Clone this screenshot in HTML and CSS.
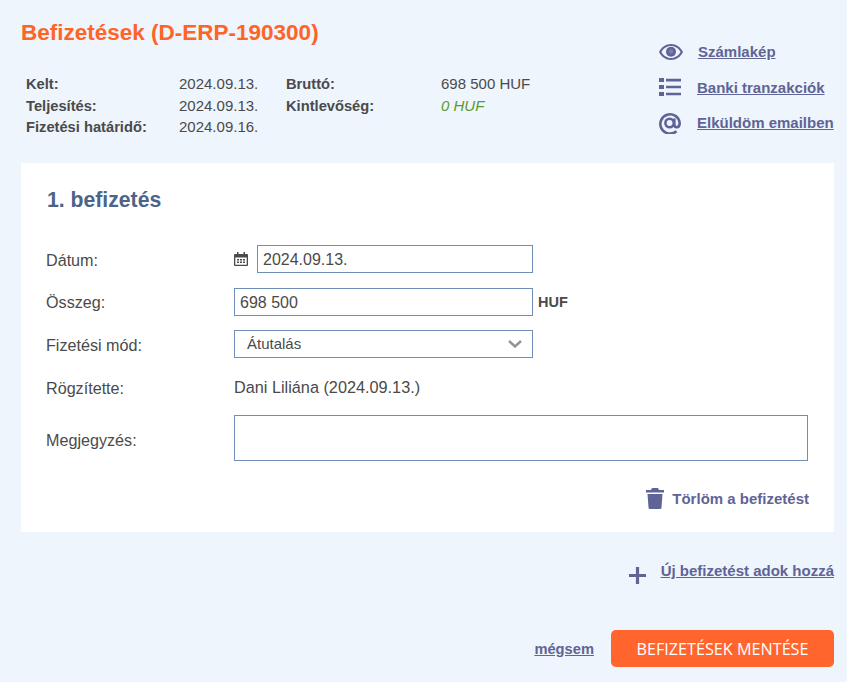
FILE: index.html
```html
<!DOCTYPE html>
<html lang="hu">
<head>
<meta charset="utf-8">
<title>Befizetések</title>
<link rel="stylesheet" href="styles.css">
</head>
<body>
<div class="page">
  <header class="head">
    <div class="head-left">
      <h1 class="title">Befizetések (D-ERP-190300)</h1>
      <div class="meta">
        <b class="k1">Kelt:</b><span>2024.09.13.</span><b>Bruttó:</b><span>698 500 HUF</span>
        <b class="k1">Teljesítés:</b><span>2024.09.13.</span><b>Kintlevőség:</b><i class="zero">0 HUF</i>
        <b class="k1">Fizetési határidő:</b><span>2024.09.16.</span>
      </div>
    </div>
    <nav class="actions">
      <a class="action a-eye" href="#">
        <svg class="ic-eye" viewBox="0 0 24 16" width="24" height="16"><path fill="#5f6496" d="M12 0C6.800 0 2.400 3.200 0 8c2.400 4.800 6.800 8 12 8s9.600-3.200 12-8c-2.400-4.800-6.800-8-12-8zM2.400 8C4.400 4.500 7.800 2 12 2s7.600 2.500 9.600 6c-2 3.500-5.400 6-9.600 6S4.400 11.500 2.400 8z"/><circle cx="12" cy="7.800" r="5" fill="#5f6496"/><circle cx="12" cy="7.500" r="2.200" fill="#7a80ad"/></svg>
        <span class="link">Számlakép</span>
      </a>
      <a class="action" href="#">
        <svg class="ic-list" viewBox="0 0 22 18" width="22" height="18"><path fill="#5f6496" d="M0 0h5v4H0zM7 .8h15v2.600H7zM0 7h5v4H0zM7 7.700h15v2.600H7zM0 14h5v4H0zM7 14.700h15v2.600H7z"/></svg>
        <span class="link">Banki tranzakciók</span>
      </a>
      <a class="action" href="#">
        <svg class="ic-at" viewBox="0 0 22 22" width="22" height="22"><path fill="none" stroke="#5f6496" stroke-width="2.600" d="M17.500 19.200A9.700 9.700 0 1 1 20.700 11c0 2.600-1.400 4.200-3 4.200-1.500 0-2.400-1-2.400-2.600V6.500"/><circle cx="10.600" cy="11" r="4.200" fill="none" stroke="#5f6496" stroke-width="2.600"/></svg>
        <span class="link">Elküldöm emailben</span>
      </a>
    </nav>
  </header>

  <section class="card">
    <h2 class="card-title">1. befizetés</h2>
    <div class="form">
      <div class="row r-date">
        <label class="lbl">Dátum:</label>
        <svg class="ic-cal" viewBox="0 0 14 14" width="14" height="14"><path fill="#4a4a4a" d="M3 0h1.500v2h5V0H11v2h2a1 1 0 0 1 1 1v10a1 1 0 0 1-1 1H1a1 1 0 0 1-1-1V3a1 1 0 0 1 1-1h2zM1.300 5.500v7.200h11.400V5.500z"/><path fill="#4a4a4a" d="M3 7h2v1.500H3zM6 7h2v1.500H6zM9 7h2v1.500H9zM3 9.500h2V11H3zM6 9.500h2V11H6zM9 9.500h2V11H9z"/></svg>
        <div class="input date">2024.09.13.</div>
      </div>
      <div class="row r-sum">
        <label class="lbl">Összeg:</label>
        <div class="input sum">698 500</div>
        <b class="cur">HUF</b>
      </div>
      <div class="row r-mode">
        <label class="lbl">Fizetési mód:</label>
        <div class="select">
          <span class="sel-text">Átutalás</span>
          <svg viewBox="0 0 14 8" width="14" height="8"><path fill="none" stroke="#8f959b" stroke-width="2.400" d="M1 1l6 5.500L13 1"/></svg>
        </div>
      </div>
      <div class="row r-by">
        <label class="lbl">Rögzítette:</label>
        <span class="val">Dani Liliána (2024.09.13.)</span>
      </div>
      <div class="row r-note">
        <label class="lbl">Megjegyzés:</label>
        <div class="note"></div>
      </div>
    </div>
    <div class="del-row">
      <a class="del" href="#">
        <svg viewBox="0 0 18 21" width="18" height="21"><path fill="#5f6496" d="M6 0h6l1 2h5v2.500H0V2h5zM1.500 6h15L15.500 19.500a1.500 1.500 0 0 1-1.500 1.500H4a1.500 1.500 0 0 1-1.500-1.500z"/></svg>
        <span>Törlöm a befizetést</span>
      </a>
    </div>
  </section>

  <div class="add-row">
    <svg class="ic-plus" viewBox="0 0 16 16" width="17" height="17"><path fill="#5f6496" d="M6.500 0h3v6.500H16v3H9.500V16h-3V9.500H0v-3h6.500z"/></svg>
    <a class="link" href="#">Új befizetést adok hozzá</a>
  </div>

  <footer class="foot">
    <a class="link" href="#">mégsem</a>
    <button class="save" type="button">BEFIZETÉSEK MENTÉSE</button>
  </footer>
</div>
</body>
</html>
```
FILE: styles.css
```css
html, body { margin: 0; padding: 0; }
body {
  background: #eef5fd;
  font-family: "Liberation Sans", Arial, sans-serif;
  color: #4a4a4a;
  font-size: 15px;
}
.page { width: 813px; margin-left: 21px; }
.head { display: flex; justify-content: space-between; height: 163px; }
.title {
  margin: 0;
  padding-top: 19px;
  font-size: 22.500px;
  line-height: 28px;
  font-weight: bold;
  color: #ff6427;
}
.meta {
  display: grid;
  grid-template-columns: 158px 107px 155px auto;
  grid-template-rows: 22px 21px 21px;
  align-items: baseline;
  margin-top: 26px;
  font-size: 15px;
  line-height: 21px;
}
.meta b { font-weight: bold; font-size: 14.700px; }
.k1 { padding-left: 5px; }
.zero { color: #5d9a2e; font-style: italic; }
.actions { display: flex; flex-direction: column; padding-top: 34px; width: 175px; }
.action { display: flex; align-items: center; height: 35.500px; text-decoration: none; }
.action svg { flex: none; }
.action .link { margin-left: 16px; }
.a-eye .link { margin-left: 15px; }
.link {
  color: #5f6496;
  font-weight: bold;
  font-size: 15px;
  text-decoration: underline;
}
.foot .link { font-size: 14.700px; }
.card {
  background: #fff;
  height: 369px;
  box-sizing: border-box;
  padding: 24px 25px 0;
}
.card-title {
  margin: 0;
  padding-left: 1px;
  font-size: 21.200px;
  line-height: 26px;
  font-weight: bold;
  color: #4c6488;
}
.form { margin-top: 32px; }
.row { display: flex; align-items: center; font-size: 16.150px; }
.lbl { width: 188px; flex: none; padding-top: 2px; box-sizing: border-box; }
.r-date { height: 28px; }
.r-sum { height: 28px; margin-top: 15px; }
.r-sum .lbl { padding-top: 0; }
.r-mode { height: 28px; margin-top: 14px; }
.r-by { height: 28px; margin-top: 15px; }
.r-note { height: 46px; margin-top: 14px; }
.r-note .lbl { padding-top: 4px; }
.val { font-size: 16.250px; }
.ic-cal { margin-right: 9px; flex: none; }
.input, .select, .note {
  box-sizing: border-box;
  border: 1px solid #6f8fb8;
  background: #fff;
  height: 28px;
}
.input { padding: 0 5px; line-height: 27px; font-size: 16px; }
.date { width: 276px; }
.sum { width: 299px; }
.cur { margin-left: 5px; font-size: 14.500px; }
.select {
  width: 299px;
  display: flex;
  align-items: center;
  justify-content: space-between;
  padding: 0 10px 0 12px;
  font-size: 15px;
}
.sel-text { padding-bottom: 2px; }
.note { width: 574px; height: 46px; }
.del-row { display: flex; justify-content: flex-end; margin-top: 27px; padding-right: 0; }
.del { display: flex; align-items: center; gap: 8px; color: #5f6496; font-weight: bold; font-size: 15px; text-decoration: none; }
.add-row { display: flex; justify-content: flex-end; margin-top: 31px; height: 36px; line-height: 16px; }
.ic-plus { margin-right: 15px; margin-top: 4px; }
.foot { display: flex; justify-content: flex-end; align-items: center; margin-top: 31px; gap: 17px; }
.save {
  width: 223px;
  height: 37px;
  border: 0;
  border-radius: 5px;
  background: #ff652d;
  color: #fff;
  font-family: "Open Sans", sans-serif;
  font-size: 16.200px;
  padding: 0;
}
```
